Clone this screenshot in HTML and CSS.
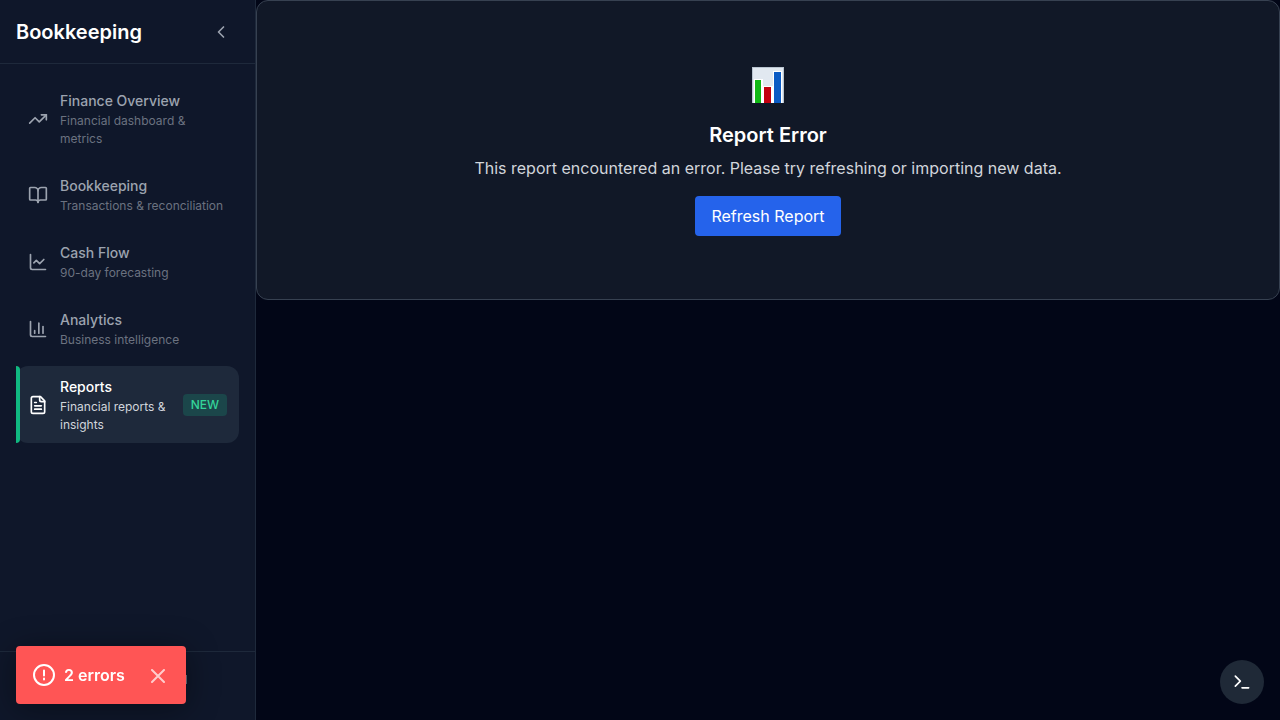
FILE: index.html
```html
<!DOCTYPE html>
<html lang="en">
<head>
<meta charset="utf-8">
<meta name="viewport" content="width=device-width, initial-scale=1">
<title>Bookkeeping</title>
<link rel="stylesheet" href="styles.css">
</head>
<body>
<div class="app">
  <aside class="sidebar">
    <header class="sidebar-header">
      <h1 class="brand">Bookkeeping</h1>
      <button class="collapse" type="button" aria-label="Collapse sidebar">
        <svg class="icon" viewBox="0 0 24 24"><path d="m15 18-6-6 6-6"/></svg>
      </button>
    </header>
    <nav class="nav">
      <a class="nav-item" href="#overview">
        <svg class="icon" viewBox="0 0 24 24"><path d="m22 7-8.500 8.500-5-5L2 17"/><path d="M16 7h6v6"/></svg>
        <span class="nav-text"><span class="nav-title">Finance Overview</span><span class="nav-sub">Financial dashboard &amp; metrics</span></span>
      </a>
      <a class="nav-item" href="#bookkeeping">
        <svg class="icon" viewBox="0 0 24 24"><path d="M12 7v14"/><path d="M3 18a1 1 0 0 1-1-1V4a1 1 0 0 1 1-1h5a4 4 0 0 1 4 4 4 4 0 0 1 4-4h5a1 1 0 0 1 1 1v13a1 1 0 0 1-1 1h-6a3 3 0 0 0-3 3 3 3 0 0 0-3-3z"/></svg>
        <span class="nav-text"><span class="nav-title">Bookkeeping</span><span class="nav-sub">Transactions &amp; reconciliation</span></span>
      </a>
      <a class="nav-item" href="#cash-flow">
        <svg class="icon" viewBox="0 0 24 24"><path d="M3 3v16a2 2 0 0 0 2 2h16"/><path d="m19 9-5 5-4-4-3 3"/></svg>
        <span class="nav-text"><span class="nav-title">Cash Flow</span><span class="nav-sub">90-day forecasting</span></span>
      </a>
      <a class="nav-item" href="#analytics">
        <svg class="icon" viewBox="0 0 24 24"><path d="M3 3v16a2 2 0 0 0 2 2h16"/><path d="M18 17V9"/><path d="M13 17V5"/><path d="M8 17v-3"/></svg>
        <span class="nav-text"><span class="nav-title">Analytics</span><span class="nav-sub">Business intelligence</span></span>
      </a>
      <a class="nav-item active" href="#reports" aria-current="page">
        <svg class="icon" viewBox="0 0 24 24"><path d="M15 2H6a2 2 0 0 0-2 2v16a2 2 0 0 0 2 2h12a2 2 0 0 0 2-2V7Z"/><path d="M14 2v4a2 2 0 0 0 2 2h4"/><path d="M10 9H8"/><path d="M16 13H8"/><path d="M16 17H8"/></svg>
        <span class="nav-text"><span class="nav-title">Reports</span><span class="nav-sub">Financial reports &amp; insights</span></span>
        <span class="badge">NEW</span>
      </a>
    </nav>
    <footer class="sidebar-footer"><span class="footer-mark"></span></footer>
  </aside>
  <main class="main">
    <section class="error-card">
      <div class="emoji" aria-hidden="true">
        <svg class="chart" viewBox="0 0 32 36"><rect width="32" height="36" fill="#b9c4d0"/><rect x="1" y="1" width="30" height="35" fill="#e1e8f0"/><path fill="#fff" d="M2 12h9v24H2zM11 19h10v17H11zM21 4h9v32h-9z"/><path fill="#0fb814" d="M3 13h6v23H3z"/><path fill="#c3000f" d="M12 20h7v16h-7z"/><path fill="#0b5bc4" d="M22 5h7v31h-7z"/></svg>
      </div>
      <h2 class="error-title">Report Error</h2>
      <p class="error-text">This report encountered an error. Please try refreshing or importing new data.</p>
      <button class="refresh" type="button">Refresh Report</button>
    </section>
  </main>
</div>
<div class="toast" role="alert">
  <svg class="toast-icon" viewBox="0 0 24 24"><circle cx="12" cy="12" r="10"/><path d="M12 7.500v5M12 15.500v1"/></svg>
  <span class="toast-text">2 errors</span>
  <button class="toast-close" type="button" aria-label="Dismiss">
    <svg class="close-icon" viewBox="0 0 24 24"><path d="M6 7l12 12M18 7 6 19"/></svg>
  </button>
</div>
<button class="console" type="button" aria-label="Open console">
  <svg class="icon" viewBox="0 0 24 24"><path d="m4 17 6-6-6-6M12 19h8"/></svg>
</button>
</body>
</html>
```
FILE: styles.css
```css
* { box-sizing: border-box; margin: 0; padding: 0; }
body {
  background: #020617;
  color: #fff;
  font-family: Inter, "Liberation Sans", sans-serif;
  font-size: 16px;
  line-height: 24px;
}
button { border: 0; background: none; color: inherit; font: inherit; cursor: pointer; }
svg { display: block; flex: none; fill: none; stroke: currentColor; stroke-width: 2; stroke-linecap: round; stroke-linejoin: round; }
.app { display: flex; min-height: 100vh; }
.sidebar {
  display: flex;
  flex: none;
  flex-direction: column;
  width: 256px;
  background: #0f172a;
  border-right: 1px solid #1e293b;
}
.sidebar-header {
  display: flex;
  align-items: center;
  justify-content: space-between;
  height: 64px;
  padding: 0 16px;
  border-bottom: 1px solid #1e293b;
}
.brand { font-size: 20px; font-weight: 600; line-height: 28px; }
.collapse { padding: 8px; color: #9ca3af; }
.icon { width: 20px; height: 20px; }
.nav { display: flex; flex: 1; flex-direction: column; gap: 8px; padding: 16px; }
.nav-item {
  position: relative;
  display: flex;
  align-items: center;
  gap: 12px;
  padding: 10px 12px 9px;
  border-radius: 12px;
  color: #9ca3af;
  text-decoration: none;
}
.nav-text { display: flex; flex: 1; flex-direction: column; gap: 1px; min-width: 0; }
.nav-title { font-size: 14px; font-weight: 500; line-height: 21px; }
.nav-sub { color: #6b7280; font-size: 12px; line-height: 18px; }
.active { background: #1e293b; color: #fff; }
.active::before {
  content: "";
  position: absolute;
  top: 0;
  bottom: 0;
  left: 0;
  width: 4px;
  border-radius: 0 4px 4px 0;
  background: #10b981;
}
.active .nav-sub { color: #d1d5db; }
.badge {
  padding: 2px 8px;
  border-radius: 4px;
  background: #1b464a;
  color: #34d399;
  font-size: 12px;
  font-weight: 500;
  line-height: 18px;
}
.sidebar-footer {
  display: flex;
  justify-content: center;
  min-height: 69px;
  padding: 23px 16px;
  border-top: 1px solid #1e293b;
}
.footer-mark { width: 119px; height: 9px; border-right: 1px solid #6b7280; }
.main { flex: 1; min-width: 0; }
.error-card {
  display: flex;
  flex-direction: column;
  align-items: center;
  padding: 64px 32px 63px;
  border: 1px solid #374151;
  border-radius: 12px;
  background: #111827;
  text-align: center;
}
.emoji { display: flex; align-items: center; height: 40px; margin-bottom: 16px; }
.chart { width: 32px; height: 36px; stroke: none; }
.error-title { margin-bottom: 7px; font-size: 20px; font-weight: 600; line-height: 28px; }
.error-text { margin-bottom: 16px; color: #d1d5db; }
.refresh { padding: 8px 16px; border-radius: 4px; background: #2563eb; }
.toast {
  position: fixed;
  bottom: 16px;
  left: 16px;
  display: flex;
  align-items: center;
  padding: 17px 16px;
  border-radius: 4px;
  background: #ff5555;
  box-shadow: 0 4px 32px rgba(0, 0, 0, 0.4);
  font-weight: 600;
}
.toast-icon { width: 24px; height: 24px; margin-right: 8px; }
.toast-close { margin-left: 21px; opacity: 0.7; }
.close-icon { width: 24px; height: 24px; }
.console {
  position: fixed;
  right: 16px;
  bottom: 16px;
  display: flex;
  align-items: center;
  justify-content: center;
  width: 44px;
  height: 44px;
  border-radius: 50%;
  background: #1f2937;
}
```
